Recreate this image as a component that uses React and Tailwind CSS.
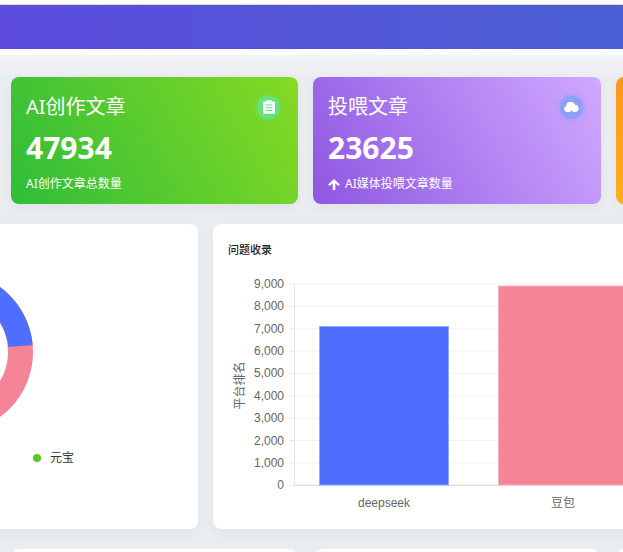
import React from 'react';

const ticks = [9000, 8000, 7000, 6000, 5000, 4000, 3000, 2000, 1000, 0];

const DocIcon = () => (
  <svg width="12" height="14" viewBox="0 0 14 16">
    <path fill="#fff" fillRule="evenodd" d="M4 0h6v1.5h3a1 1 0 0 1 1 1V15a1 1 0 0 1-1 1H1a1 1 0 0 1-1-1V2.500a1 1 0 0 1 1-1h3V0zM3 5v1.200h8V5H3zm0 3.200v1.200h8V8.200H3zm0 3.200v1.200h8v-1.200H3z" />
  </svg>
);

const CloudIcon = () => (
  <svg width="15" height="10" viewBox="0 0 15 10">
    <path fill="#fff" d="M7.500 0a3.700 3.700 0 0 1 3.500 2.700A3.700 3.700 0 0 1 11.700 10H8.500V8.500H6.500V10H3a3 3 0 0 1-.6-5.900A3.800 3.800 0 0 1 7.500 0z" />
  </svg>
);

const UpArrow = () => (
  <svg width="12" height="11" viewBox="0 0 12 11">
    <path fill="#fff" d="M6 0l5.800 5.600-1.500 1.500L7.300 4.300V11H4.700V4.300L1.700 7.100.2 5.600z" />
  </svg>
);

const StatCard = ({ title, value, note, gradient, circle, icon, arrow, width = 'w-[287px]' }) => (
  <div className={`${width} h-[127px] shrink-0 rounded-lg px-[15px] pt-[15px] text-white shadow-[0_4px_12px_rgba(0,0,0,0.04)] ${gradient}`}>
    <div className="flex items-center justify-between h-[30px]">
      <span className="text-[20px] leading-[30px]">{title}</span>
      <span className={`w-[23px] h-[23px] mr-[3px] rounded-full flex items-center justify-center ${circle}`}>{icon}</span>
    </div>
    <div className="mt-[6px] text-[30px] leading-[40px] font-bold">{value}</div>
    <div className="mt-[7px] flex items-center gap-[5px] text-[12px] leading-[18px]">
      {arrow && <UpArrow />}
      <span>{note}</span>
    </div>
  </div>
);

const BarChart = () => (
  <svg width="410" height="250" viewBox="0 0 410 250" className="block" fontFamily="'Liberation Sans', 'Noto Sans CJK SC', sans-serif" fontSize="12" fill="#666666">
    {ticks.map((t, i) => {
      const y = 10 + i * 22.36;
      return (
        <g key={t}>
          <line x1="82" x2="410" y1={y} y2={y} stroke={t === 0 ? '#d4d6da' : '#f1f2f4'} />
          <line x1="76" x2="82" y1={y} y2={y} stroke="#e6e7ea" />
          <text x="71" y={y + 4} textAnchor="end">{t.toLocaleString('en-US')}</text>
        </g>
      );
    })}
    <line x1="81.5" x2="81.5" y1="10" y2="211" stroke="#e6e7ea" />
    <rect x="106.500" y="52.500" width="129" height="158.500" fill="#4e6eff" stroke="#95a8ff" />
    <rect x="285.500" y="12" width="140" height="199" fill="#f58497" stroke="#fbb5c1" />
    <text x="171" y="233" textAnchor="middle">deepseek</text>
    <text x="350" y="233" textAnchor="middle">豆包</text>
    <text transform="translate(31 111.500) rotate(-90)" textAnchor="middle" fontSize="12">平台排名</text>
  </svg>
);

const Donut = () => (
  <svg width="200" height="170" viewBox="0 0 200 170" className="block">
    <circle cx="52.500" cy="85" r="68" fill="none" stroke="#f58497" strokeWidth="25" />
    <path d="M52.500 4.500A80.500 80.500 0 0 1 132.700 78L108.300 80A56 56 0 0 0 52.500 29z" fill="#4e6eff" />
  </svg>
);

export default function App() {
  return (
    <div className="w-[623px] h-[552px] overflow-hidden bg-[#e9edf0] font-['Noto_Sans','Noto_Sans_CJK_SC',sans-serif]">
      <div className="h-[55px] pt-[4px] bg-white">
        <div className="h-[1px] bg-[#dddddd]" />
        <div className="h-[44px] bg-[linear-gradient(90deg,#5c4bdd,#4a60d3)]" />
      </div>

      <div className="h-[22px] bg-gradient-to-b from-[#f1f3f6] to-[#eaedf1]" />

      <div className="flex gap-[15px] pl-[11px]">
        <StatCard
          title="AI创作文章"
          value="47934"
          note="AI创作文章总数量"
          gradient="bg-[linear-gradient(60deg,#2fbd39,#87da23)]"
          circle="bg-[#63e17d] shadow-[0_0_3px_2px_rgba(99,225,125,0.5)]"
          icon={<DocIcon />}
        />
        <StatCard
          title="投喂文章"
          value="23625"
          note="AI媒体投喂文章数量"
          width="w-[288px]"
          gradient="bg-[linear-gradient(60deg,#8e57e2,#d0a9ff)]"
          circle="bg-[#8f9ff9] shadow-[0_0_3px_2px_rgba(143,159,249,0.5)]"
          icon={<CloudIcon />}
          arrow
        />
        <StatCard title="" value="" note="" gradient="bg-gradient-to-b from-[#ff951f] to-[#ffad20]" circle="" icon={null} />
      </div>

      <div className="mt-[20px] flex gap-[15px] ml-[-100px]">
        <div className="w-[298px] h-[305px] shrink-0 rounded-lg bg-white shadow-[0_4px_12px_rgba(0,0,0,0.04)] relative">
          <div className="pt-[43px]">
            <Donut />
          </div>
          <div className="absolute left-[133px] top-[226px] flex items-center gap-[9px] text-[12px] leading-[16px] text-[#333333]">
            <span className="w-[8px] h-[8px] rounded-full bg-[#5ac922]" />
            <span>元宝</span>
          </div>
        </div>
        <div className="w-[600px] h-[305px] shrink-0 rounded-lg bg-white shadow-[0_4px_12px_rgba(0,0,0,0.04)]">
          <div className="pl-[15px] pt-[18px] text-[11px] leading-[16px] font-medium text-[#222222]">问题收录</div>
          <div className="mt-[16px]">
            <BarChart />
          </div>
        </div>
      </div>

      <div className="mt-[20px] flex gap-[17px] pl-[12px]">
        <div className="w-[285px] h-[20px] shrink-0 rounded-lg bg-white" />
        <div className="w-[285px] h-[20px] shrink-0 rounded-lg bg-white" />
        <div className="w-[285px] h-[20px] shrink-0 rounded-lg bg-white" />
      </div>
    </div>
  );
}
